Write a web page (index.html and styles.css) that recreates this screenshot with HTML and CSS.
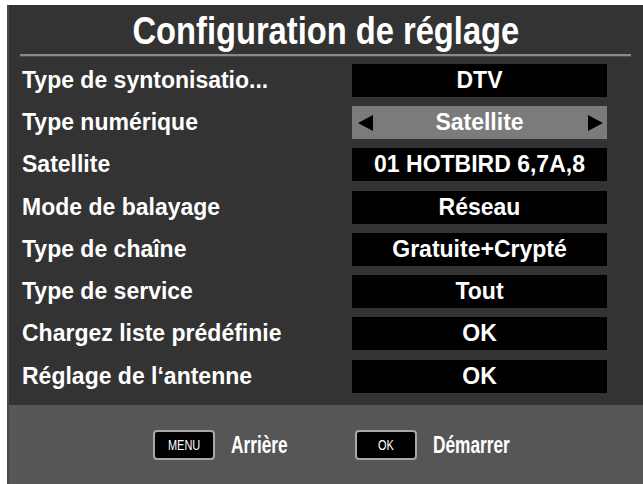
FILE: index.html
```html
<!DOCTYPE html>
<html lang="fr">
<head>
    <meta charset="UTF-8">
    <title>Configuration de réglage</title>
    <link rel="stylesheet" href="styles.css">
</head>
<body>
    <div class="osd">
        <div class="osd-header">
            <h1><span class="narrow">Configuration de réglage</span></h1>
        </div>

        <div class="settings">
            <div class="row">
                <span class="label">Type de syntonisatio...</span>
                <span class="value">DTV</span>
            </div>
            <div class="row">
                <span class="label">Type numérique</span>
                <span class="value selected">
                    <span class="arrow arrow-left"></span>
                    Satellite
                    <span class="arrow arrow-right"></span>
                </span>
            </div>
            <div class="row">
                <span class="label">Satellite</span>
                <span class="value">01 HOTBIRD 6,7A,8</span>
            </div>
            <div class="row">
                <span class="label">Mode de balayage</span>
                <span class="value">Réseau</span>
            </div>
            <div class="row">
                <span class="label">Type de chaîne</span>
                <span class="value">Gratuite+Crypté</span>
            </div>
            <div class="row">
                <span class="label">Type de service</span>
                <span class="value">Tout</span>
            </div>
            <div class="row">
                <span class="label">Chargez liste prédéfinie</span>
                <span class="value">OK</span>
            </div>
            <div class="row">
                <span class="label">Réglage de l‘antenne</span>
                <span class="value">OK</span>
            </div>
        </div>

        <div class="osd-footer">
            <div class="hint">
                <span class="key"><span class="narrow">MENU</span></span>
                <span class="hint-text"><span class="narrow">Arrière</span></span>
            </div>
            <div class="hint">
                <span class="key"><span class="narrow">OK</span></span>
                <span class="hint-text"><span class="narrow">Démarrer</span></span>
            </div>
        </div>
    </div>
</body>
</html>
```

FILE: styles.css
```css
body {
    margin: 0;
    background-color: #fff;
    font-family: "Liberation Sans", Arial, sans-serif;
    font-weight: bold;
    color: #fff;
}

.osd {
    margin: 5px 0 0 7px;
    height: 479px;
    background-color: #333;
    border-left: 2px solid #4a4a4a;
    display: flex;
    flex-direction: column;
    overflow: hidden;
}

/* police étroite du téléviseur */
.narrow {
    display: inline-block;
    transform: scaleX(0.86);
}

/* titre */
.osd-header {
    margin: 0 12px 0 11px;
    height: 49px;
    border-bottom: 2px solid #8a8a8a;
    box-shadow: 0 1px 0 #4e4e4e;
    text-align: center;
}

.osd-header h1 {
    margin: 0;
    font-size: 38px;
    line-height: 52px;
    white-space: nowrap;
}

.settings {
    padding: 3px 0 0 13px;
    display: flex;
    flex-direction: column;
}

.row {
    height: 42.3px;
    display: flex;
    align-items: center;
}

.label {
    width: 330px;
    font-size: 23px;
}

.value {
    position: relative;
    width: 255px;
    height: 33px;
    background-color: #000;
    text-align: center;
    font-size: 23px;
    line-height: 33px;
}

.value.selected {
    background-color: #7b7b7b;
}

.arrow {
    position: absolute;
    top: 9px;
    width: 0;
    height: 0;
    border-top: 8px solid transparent;
    border-bottom: 8px solid transparent;
}

.arrow-left {
    left: 6px;
    border-right: 15px solid #000;
}

.arrow-right {
    right: 4px;
    border-left: 15px solid #000;
}

/* barre du bas */
.osd-footer {
    margin-top: auto;
    height: 79px;
    background-color: #565656;
    display: flex;
    align-items: center;
    gap: 45px;
    padding-left: 144px;
}

.hint {
    display: flex;
    align-items: center;
    gap: 16px;
}

.key {
    width: 58px;
    height: 26px;
    background-color: #000;
    border: 2px solid #a8a8a8;
    border-radius: 4px;
    font-weight: normal;
    font-size: 15px;
    line-height: 26px;
    text-align: center;
}

.key .narrow {
    transform: scaleX(0.73);
}

.hint-text {
    font-size: 24px;
}

.hint-text .narrow {
    transform: scaleX(0.72);
    transform-origin: left center;
}
```
